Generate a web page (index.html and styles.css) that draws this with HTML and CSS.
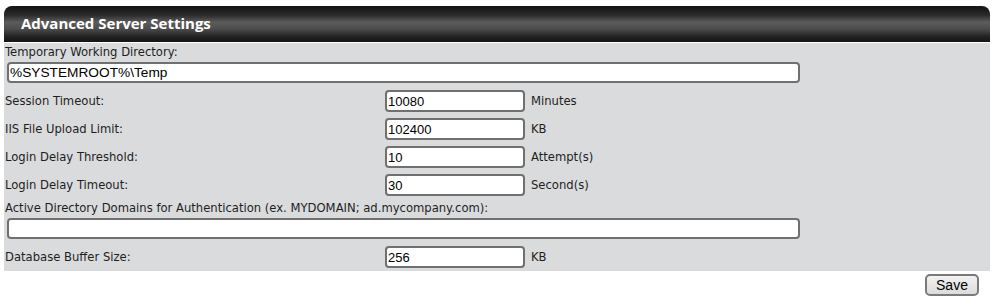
FILE: index.html
```html
<!DOCTYPE html>
<html>

<head>
    <title>Advanced Server Settings</title>
    <link rel="stylesheet" href="styles.css">
</head>

<body>
    <div class="panel">
        <!-- header bar -->
        <div class="panel-header">Advanced Server Settings</div>
        <div class="panel-body">
            <div class="label-line">Temporary Working Directory:</div>
            <div class="wide-line"><input class="wide-input" type="text" value="%SYSTEMROOT%\Temp"></div>

            <div class="row">
                <span class="row-label">Session Timeout:</span>
                <input class="short-input" type="text" value="10080">
                <span class="unit">Minutes</span>
            </div>
            <div class="row">
                <span class="row-label">IIS File Upload Limit:</span>
                <input class="short-input" type="text" value="102400">
                <span class="unit">KB</span>
            </div>
            <div class="row">
                <span class="row-label">Login Delay Threshold:</span>
                <input class="short-input" type="text" value="10">
                <span class="unit">Attempt(s)</span>
            </div>
            <div class="row">
                <span class="row-label">Login Delay Timeout:</span>
                <input class="short-input" type="text" value="30">
                <span class="unit">Second(s)</span>
            </div>

            <div class="label-line">Active Directory Domains for Authentication (ex. MYDOMAIN; ad.mycompany.com):</div>
            <div class="wide-line"><input class="wide-input" type="text" value=""></div>

            <div class="row">
                <span class="row-label">Database Buffer Size:</span>
                <input class="short-input" type="text" value="256">
                <span class="unit">KB</span>
            </div>
        </div>
    </div>
    <div class="actions">
        <button class="save-button">Save</button>
    </div>
</body>

</html>
```

FILE: styles.css
```css
html,
body {
    margin: 0;
    background: #fff;
}

body {
    padding: 6px 5px 0 4px;
    font-family: "DejaVu Sans", sans-serif;
    font-size: 11.6px;
    color: #1e1e1e;
}

/* dark rounded header with a lighter middle band */
.panel-header {
    height: 36px;
    line-height: 34px;
    padding-left: 17px;
    border-radius: 8px 8px 0 0;
    background: linear-gradient(to bottom, #121212 0%, #2a2a2a 25%, #5c5c5c 45%, #4a4a4a 65%, #222 85%, #141414 100%);
    color: #fff;
    font-family: "Open Sans", sans-serif;
    font-weight: bold;
    font-size: 15px;
    border-bottom: 1px solid #fff;
}

.panel-body {
    background: #dadbdd;
    padding: 0 0 0 1px;
}

.label-line {
    height: 19px;
    line-height: 19px;
}

.wide-line {
    padding: 0 0 4px 2px;
}

.wide-input {
    box-sizing: border-box;
    width: 793px;
    height: 21px;
    border: 2px solid #707070;
    border-radius: 4px;
    padding: 0 1px;
    font-family: "Liberation Sans", sans-serif;
    font-size: 13.7px;
    color: #000;
    background: #fff;
}

.row {
    display: flex;
    align-items: center;
    height: 28px;
}

.row-label {
    width: 380px;
}

.short-input {
    box-sizing: border-box;
    width: 140px;
    height: 22px;
    border: 2px solid #707070;
    border-radius: 4px;
    padding: 0 1px;
    font-family: "Liberation Sans", sans-serif;
    font-size: 13px;
    color: #000;
    background: #fff;
}

.unit {
    margin-left: 6px;
}

.actions {
    display: flex;
    justify-content: flex-end;
    padding: 3px 11px 0 0;
}

.save-button {
    width: 54px;
    height: 22px;
    padding: 0;
    border: 2px solid #7a7a7a;
    border-radius: 5px;
    background: linear-gradient(to bottom, #f2f2f2, #dcdcdc);
    font-family: "Liberation Sans", sans-serif;
    font-size: 14px;
    color: #000;
}
```
